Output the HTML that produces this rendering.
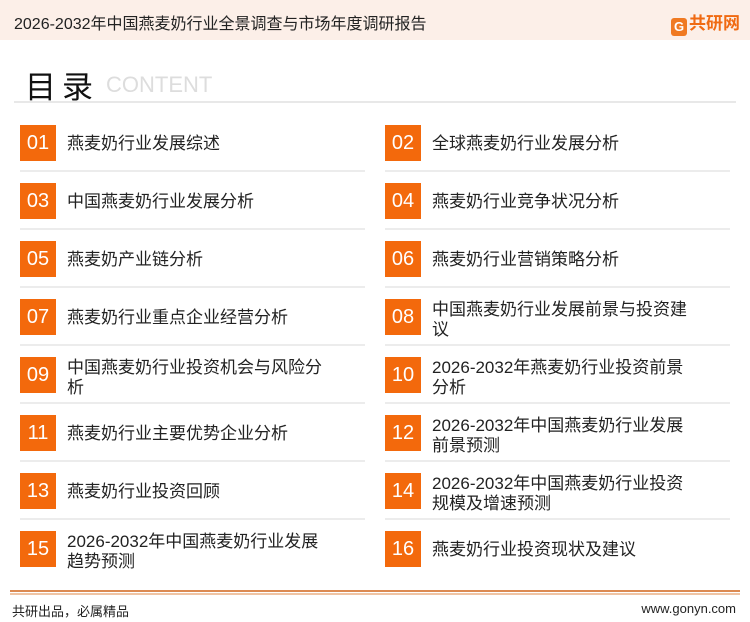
<!DOCTYPE html>
<html><head><meta charset="utf-8"><style>
*{margin:0;padding:0;box-sizing:border-box}
body{width:750px;height:622px;background:#fff;font-family:"Liberation Sans","Noto Sans CJK SC",sans-serif;position:relative;overflow:hidden;color:#222}
.hd{position:absolute;left:0;top:0;width:750px;height:40px;background:#fcefe8}
.hd .t{position:absolute;left:14px;top:10px;font-size:16px;color:#222}
.logo{position:absolute;right:10px;top:9px;font-size:17px;font-weight:bold;color:#f06a12}
.logo span{display:inline-block;width:16px;height:18px;background:#f07a22;border-radius:3px;color:#fff;font-size:13px;text-align:center;line-height:18px;margin-right:2px;vertical-align:-2px}
.ti{position:absolute;left:25px;top:62px;font-size:31px;color:#111;letter-spacing:6px}
.ce{position:absolute;left:106px;top:72px;font-size:22px;color:#ddd}
.hl{position:absolute;left:14px;top:101px;width:722px;height:2px;background:#e8e8e8}
.it{position:absolute;height:36px}
.b{position:absolute;left:0;top:0;width:36px;height:36px;background:#f3690c;color:#fff;font-size:20px;text-align:center;line-height:36px}
.tx{position:absolute;left:47px;font-size:17px;line-height:20px;white-space:nowrap;color:#222}
.s{top:9px}.d{top:1px}
.ln{position:absolute;height:2px;background:#ececec;width:345px}
.fl{position:absolute;left:10px;top:590px;width:730px;height:2px;background:#dc8a52}
.fl2{position:absolute;left:10px;top:593px;width:730px;height:2px;background:#efc4a4}
.ft{position:absolute;top:601px;font-size:13px;color:#222}
</style></head><body>
<div class="hd"><div class="t">2026-2032年中国燕麦奶行业全景调查与市场年度调研报告</div><div class="logo"><span>G</span>共研网</div></div>
<div class="ti">目录</div><div class="ce">CONTENT</div>
<div class="hl"></div>

<div class="it" style="left:20px;top:125px"><div class="b">01</div><div class="tx s">燕麦奶行业发展综述</div></div>
<div class="it" style="left:385px;top:125px"><div class="b">02</div><div class="tx s">全球燕麦奶行业发展分析</div></div>
<div class="it" style="left:20px;top:183px"><div class="b">03</div><div class="tx s">中国燕麦奶行业发展分析</div></div>
<div class="it" style="left:385px;top:183px"><div class="b">04</div><div class="tx s">燕麦奶行业竞争状况分析</div></div>
<div class="it" style="left:20px;top:241px"><div class="b">05</div><div class="tx s">燕麦奶产业链分析</div></div>
<div class="it" style="left:385px;top:241px"><div class="b">06</div><div class="tx s">燕麦奶行业营销策略分析</div></div>
<div class="it" style="left:20px;top:299px"><div class="b">07</div><div class="tx s">燕麦奶行业重点企业经营分析</div></div>
<div class="it" style="left:385px;top:299px"><div class="b">08</div><div class="tx d">中国燕麦奶行业发展前景与投资建<br>议</div></div>
<div class="it" style="left:20px;top:357px"><div class="b">09</div><div class="tx d">中国燕麦奶行业投资机会与风险分<br>析</div></div>
<div class="it" style="left:385px;top:357px"><div class="b">10</div><div class="tx d">2026-2032年燕麦奶行业投资前景<br>分析</div></div>
<div class="it" style="left:20px;top:415px"><div class="b">11</div><div class="tx s">燕麦奶行业主要优势企业分析</div></div>
<div class="it" style="left:385px;top:415px"><div class="b">12</div><div class="tx d">2026-2032年中国燕麦奶行业发展<br>前景预测</div></div>
<div class="it" style="left:20px;top:473px"><div class="b">13</div><div class="tx s">燕麦奶行业投资回顾</div></div>
<div class="it" style="left:385px;top:473px"><div class="b">14</div><div class="tx d">2026-2032年中国燕麦奶行业投资<br>规模及增速预测</div></div>
<div class="it" style="left:20px;top:531px"><div class="b">15</div><div class="tx d">2026-2032年中国燕麦奶行业发展<br>趋势预测</div></div>
<div class="it" style="left:385px;top:531px"><div class="b">16</div><div class="tx s">燕麦奶行业投资现状及建议</div></div>

<div class="ln" style="left:20px;top:170px"></div><div class="ln" style="left:385px;top:170px"></div>
<div class="ln" style="left:20px;top:228px"></div><div class="ln" style="left:385px;top:228px"></div>
<div class="ln" style="left:20px;top:286px"></div><div class="ln" style="left:385px;top:286px"></div>
<div class="ln" style="left:20px;top:344px"></div><div class="ln" style="left:385px;top:344px"></div>
<div class="ln" style="left:20px;top:402px"></div><div class="ln" style="left:385px;top:402px"></div>
<div class="ln" style="left:20px;top:460px"></div><div class="ln" style="left:385px;top:460px"></div>
<div class="ln" style="left:20px;top:518px"></div><div class="ln" style="left:385px;top:518px"></div>

<div class="fl"></div><div class="fl2"></div>
<div class="ft" style="left:12px">共研出品，必属精品</div>
<div class="ft" style="right:14px">www.gonyn.com</div>
</body></html>
